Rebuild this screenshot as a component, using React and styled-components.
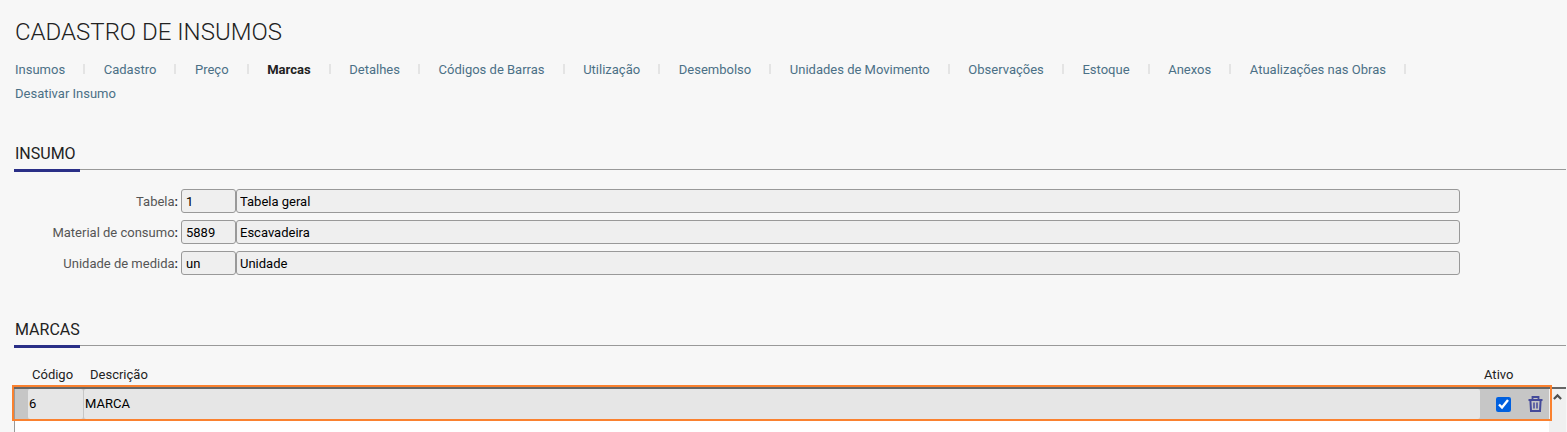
import styled, { createGlobalStyle } from "styled-components";

const tabs = [
  "Insumos",
  "Cadastro",
  "Preço",
  "Marcas",
  "Detalhes",
  "Códigos de Barras",
  "Utilização",
  "Desembolso",
  "Unidades de Movimento",
  "Observações",
  "Estoque",
  "Anexos",
  "Atualizações nas Obras",
  "Desativar Insumo",
];

const fields = [
  { id: "tabela", label: "Tabela", code: "1", text: "Tabela geral" },
  { id: "material", label: "Material de consumo", code: "5889", text: "Escavadeira" },
  { id: "unidade", label: "Unidade de medida", code: "un", text: "Unidade" },
];

const App = () => {
  return (
    <>
      <GlobalStyle />
      <Page>
        <Title>CADASTRO DE INSUMOS</Title>
        <Nav>
          {tabs.map((tab) => (
            <Tab key={tab}>
              <TabLink
                href="#"
                $active={tab === "Marcas"}
                aria-current={tab === "Marcas" ? "page" : undefined}
              >
                {tab}
              </TabLink>
            </Tab>
          ))}
        </Nav>

        <SectionTitle>INSUMO</SectionTitle>
        <Form>
          {fields.map((field) => (
            <Field key={field.id}>
              <Label htmlFor={field.id}>
                {field.label}
                <Colon>:</Colon>
              </Label>
              <CodeInput id={field.id} defaultValue={field.code} readOnly />
              <TextInput
                aria-label={`${field.label} descrição`}
                defaultValue={field.text}
                readOnly
              />
            </Field>
          ))}
        </Form>

        <SectionTitle>MARCAS</SectionTitle>
        <Grid>
          <Table>
            <colgroup>
              <Col $width={14} />
              <Col $width={56} />
              <col />
              <Col $width={69} />
            </colgroup>
            <thead>
              <tr>
                <HeadCell />
                <HeadCell>Código</HeadCell>
                <HeadCell $indent={6}>Descrição</HeadCell>
                <HeadCell>Ativo</HeadCell>
              </tr>
            </thead>
            <tbody>
              <SelectedRow>
                <Cell $first />
                <Cell>
                  <CellInput $short aria-label="Código" defaultValue="6" />
                </Cell>
                <Cell>
                  <CellInput aria-label="Descrição" defaultValue="MARCA" />
                </Cell>
                <Cell>
                  <Actions>
                    <Checkbox type="checkbox" aria-label="Ativo" defaultChecked />
                    <TrashButton type="button" aria-label="Excluir">
                      <TrashIcon />
                    </TrashButton>
                  </Actions>
                </Cell>
              </SelectedRow>
              <tr>
                <EmptyCell colSpan={4} />
              </tr>
            </tbody>
          </Table>
          <ScrollBar>
            <ScrollButton type="button" aria-label="Rolar para cima">
              <svg width="10" height="8" viewBox="0 0 10 8" fill="none">
                <path d="M1 6.2 5 2.2l4 4" stroke="#505050" strokeWidth="2.4" />
              </svg>
            </ScrollButton>
          </ScrollBar>
        </Grid>
      </Page>
    </>
  );
};

const TrashIcon = () => (
  <svg width="15" height="16" viewBox="0 0 15 16" fill="none" stroke="#444a9a">
    <path d="M0.5 4h14" strokeWidth="2" />
    <path d="M4.5 3.5V1h6v2.5" strokeWidth="1.8" />
    <path d="M2.4 4.5 3 15h9l0.6-10.5" strokeWidth="2" />
    <path d="M6 6.5v6M9 6.5v6" strokeWidth="1.5" />
  </svg>
);

export default App;

const GlobalStyle = createGlobalStyle`
  * {
    box-sizing: border-box;
  }
  body {
    margin: 0;
    background: #f7f7f7;
    color: #222;
    font-family: Roboto, "Liberation Sans", sans-serif;
    font-size: 13px;
  }
  input, button {
    font-family: inherit;
    font-size: inherit;
  }
`;

const Page = styled.main`
  padding: 16px 1px 0 14px;
`;

const Title = styled.h1`
  margin: 0;
  padding-left: 1px;
  font-size: 24px;
  font-weight: 300;
  line-height: 32px;
`;

const Nav = styled.nav`
  display: flex;
  flex-wrap: wrap;
  justify-content: space-between;
  padding: 10px 142px 0 1px;
`;

const Tab = styled.span`
  display: flex;
  align-items: center;
  &:not(:last-child)::after {
    content: "";
    width: 2px;
    height: 10px;
    margin: 0 18px 2px;
    background: #e4e4e4;
  }
`;

const TabLink = styled.a`
  color: ${({ $active }) => ($active ? "#222" : "#4b7086")};
  font-weight: ${({ $active }) => ($active ? 700 : 400)};
  line-height: 24px;
  text-decoration: none;
`;

const SectionTitle = styled.h2`
  position: relative;
  margin: 36px 0 0;
  padding: 0 0 3px 1px;
  border-bottom: 1px solid #999;
  font-size: 16px;
  font-weight: 400;
  line-height: 24px;
  &::after {
    content: "";
    position: absolute;
    top: 100%;
    left: 0;
    width: 66px;
    height: 3px;
    background: #2a2f87;
  }
`;

const Form = styled.form`
  display: flex;
  flex-direction: column;
  gap: 7px;
  padding: 19px 106px 7px 0;
`;

const Field = styled.div`
  display: flex;
  align-items: center;
`;

const Label = styled.label`
  width: 164px;
  margin-right: 3px;
  color: #555;
  text-align: right;
`;

const Colon = styled.span`
  color: #222;
  font-weight: 500;
`;

const CodeInput = styled.input`
  width: 55px;
  height: 24px;
  padding: 0 4px;
  border: 1px solid #999;
  border-radius: 3px;
  background: #efefef;
  color: #000;
`;

const TextInput = styled(CodeInput)`
  flex: 1;
  padding: 0 3px;
`;

const Grid = styled.div`
  display: flex;
  margin-top: 16px;
`;

const Table = styled.table`
  flex: 1;
  table-layout: fixed;
  border-spacing: 0;
`;

const Col = styled.col`
  width: ${({ $width }) => $width}px;
`;

const HeadCell = styled.th`
  height: 27px;
  padding: 0 0 0 ${({ $indent = 4 }) => $indent}px;
  border-bottom: 2px solid #666;
  font-weight: 400;
  text-align: left;
`;

const SelectedRow = styled.tr`
  position: relative;
  background: #c6c6c6;
  &::after {
    content: "";
    position: absolute;
    inset: -4px -3px -2px -2px;
    border: 2px solid #fa812f;
    pointer-events: none;
  }
`;

const Cell = styled.td`
  height: 30px;
  padding: 0;
  border-left: ${({ $first }) => ($first ? "1px solid #999" : "none")};
`;

const CellInput = styled.input`
  display: block;
  width: ${({ $short }) => ($short ? "55px" : "100%")};
  height: 30px;
  padding: 0 1px 2px;
  border: none;
  border-radius: 2px;
  background: #e6e6e6;
  color: #000;
`;

const Actions = styled.div`
  display: flex;
  align-items: center;
  gap: 17px;
  padding-left: 16px;
`;

const Checkbox = styled.input`
  width: 15px;
  height: 15px;
  margin: 0;
  accent-color: #0060df;
`;

const TrashButton = styled.button`
  display: flex;
  padding: 0;
  border: none;
  background: none;
  cursor: pointer;
`;

const EmptyCell = styled.td`
  height: 14px;
  padding: 0;
  border-left: 1px solid #999;
  background: #fff;
`;

const ScrollBar = styled.div`
  width: 17px;
  margin-top: 25px;
  border-top: 2px solid #666;
  background: #f0f0f0;
`;

const ScrollButton = styled.button`
  display: flex;
  width: 100%;
  padding: 4px;
  border: none;
  background: none;
`;
